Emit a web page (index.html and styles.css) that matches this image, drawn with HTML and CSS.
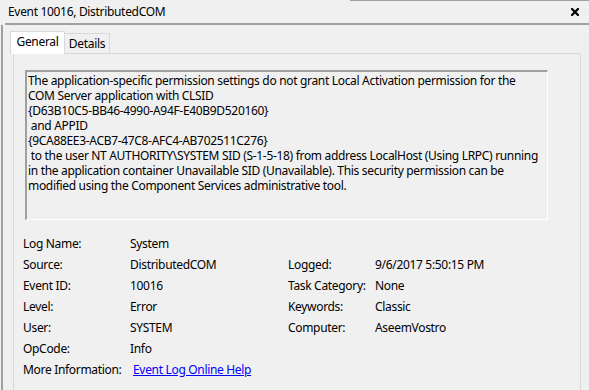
FILE: index.html
```
<!DOCTYPE html>
<html>
<head>
<meta charset="utf-8">
<link rel="stylesheet" href="styles.css">
</head>
<body>
<div class="topline"></div>
<div class="titlebar">
  <span class="title">Event 10016, DistributedCOM</span>
  <svg class="close" width="8" height="8" viewBox="0 0 8 8"><path d="M1 1L7 7M7 1L1 7" stroke="#000" stroke-width="2.2" stroke-linecap="square"/></svg>
</div>
<div class="divider"></div>
<div class="frame">
  <div class="tabstrip">
    <div class="tab selected">General</div>
    <div class="tab">Details</div>
  </div>
  <div class="panel">
    <div class="textbox">The application-specific permission settings do not grant Local Activation permission for the
COM Server application with CLSID
{D63B10C5-BB46-4990-A94F-E40B9D520160}
 and APPID
{9CA88EE3-ACB7-47C8-AFC4-AB702511C276}
 to the user NT AUTHORITY\SYSTEM SID (S-1-5-18) from address LocalHost (Using LRPC) running
in the application container Unavailable SID (Unavailable). This security permission can be
modified using the Component Services administrative tool.</div>
    <div class="info">
      <span>Log Name:</span><span>System</span><span></span><span></span>
      <span>Source:</span><span>DistributedCOM</span><span>Logged:</span><span>9/6/2017 5:50:15 PM</span>
      <span>Event ID:</span><span>10016</span><span>Task Category:</span><span>None</span>
      <span>Level:</span><span>Error</span><span>Keywords:</span><span>Classic</span>
      <span>User:</span><span>SYSTEM</span><span>Computer:</span><span>AseemVostro</span>
      <span>OpCode:</span><span>Info</span><span></span><span></span>
      <span>More Information:</span><span><a class="link" href="#">Event Log Online Help</a></span><span></span><span></span>
    </div>
  </div>
</div>
</body>
</html>
```
FILE: styles.css
```
html, body {
  margin: 0;
  padding: 0;
  overflow: hidden;
  height: 100%;
}
body {
  display: flex;
  flex-direction: column;
  background: #f0f0f0;
  font-family: "Noto Sans", "Open Sans", sans-serif;
  font-size: 12px;
  letter-spacing: -0.32px;
  color: #000;
}
.topline {
  flex: none;
  height: 1px;
  margin-left: 350px;
  background: #a0a0a0;
}
.titlebar {
  flex: none;
  height: 22px;
  display: flex;
  align-items: center;
  justify-content: space-between;
  padding: 0 10px 0 8px;
  line-height: 22px;
}
.close {
  display: block;
}
.divider {
  flex: none;
  height: 2px;
  margin-left: 5px;
  background: #a0a0a0;
}
.frame {
  flex: 1;
  display: flex;
  flex-direction: column;
  margin-left: 1px;
  border-left: 2px solid #a0a0a0;
  min-height: 0;
}
.tabstrip {
  flex: none;
  display: flex;
  align-items: flex-end;
  padding: 6px 0 0 7px;
  position: relative;
  z-index: 1;
}
.tab {
  box-sizing: border-box;
  height: 20px;
  width: 45px;
  border: 1px solid #d9d9d9;
  border-bottom: none;
  border-left: none;
  line-height: 19px;
  text-align: center;
  background: #f0f0f0;
}
.tab.selected {
  width: 55px;
  height: 23px;
  border-left: 1px solid #d9d9d9;
  background: #fff;
  margin-bottom: -1px;
}
.panel {
  flex: 1;
  margin: 0 8px -2px 10px;
  border: 1px solid #d9d9d9;
  min-height: 0;
}
.textbox {
  box-sizing: border-box;
  width: 523px;
  height: 150px;
  margin: 16px 0 0 11px;
  border-top: 2px solid #a0a0a0;
  border-left: 2px solid #a0a0a0;
  border-right: 1px solid #fff;
  border-bottom: 1px solid #fff;
  padding: 1px 0 0 1px;
  line-height: 15px;
  white-space: pre;
}
.info {
  display: grid;
  grid-template-columns: 107px 158px 87px auto;
  grid-auto-rows: 21px;
  line-height: 21px;
  margin-top: 13px;
  padding-left: 9px;
}
.link {
  margin-left: 3px;
  color: #0000ff;
  text-decoration: underline;
}
```
